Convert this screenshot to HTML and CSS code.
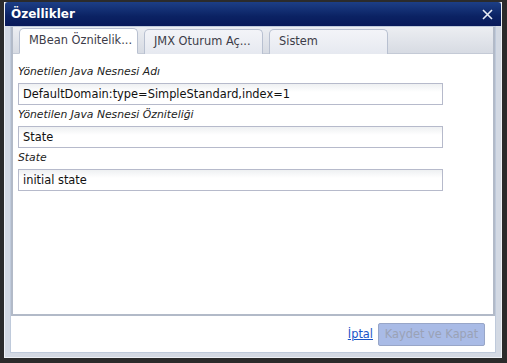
FILE: index.html
```html
<!DOCTYPE html>
<html lang="tr">
  <head>
    <meta charset="UTF-8" />
    <title>Özellikler</title>
    <link rel="stylesheet" href="styles.css">
  </head>
  <body>
    <div class="dialog">
      <div class="titlebar">
        <span class="title">Özellikler</span>
        <svg class="close" width="11" height="11" viewBox="0 0 11 11">
          <path d="M1 1 L10 10 M10 1 L1 10" stroke="#e8ecf4" stroke-width="1.6" fill="none" />
        </svg>
      </div>

      <div class="frame">
        <div class="tabpanel">
          <div class="tabstrip">
            <div class="tab active">MBean Öznitelik...</div>
            <div class="tab">JMX Oturum Aç...</div>
            <div class="tab">Sistem</div>
          </div>

          <div class="content">
            <label class="field-label">Yönetilen Java Nesnesi Adı</label>
            <input class="field" type="text" value="DefaultDomain:type=SimpleStandard,index=1">
            <label class="field-label">Yönetilen Java Nesnesi Özniteliği</label>
            <input class="field" type="text" value="State">
            <label class="field-label">State</label>
            <input class="field" type="text" value="initial state">
          </div>
        </div>

        <div class="footer">
          <a href="#" class="cancel">İptal</a>
          <button class="save" disabled>Kaydet ve Kapat</button>
        </div>
      </div>
    </div>
  </body>
</html>
```

FILE: styles.css
```css
body {
  margin: 0;
  padding: 2px 5px 0 4px;
  background-color: #2b2b2b;
  font-family: 'DejaVu Sans', Verdana, sans-serif;
  font-size: 11px;
}

/* Dialog window */
.dialog {
  width: 496px;
  height: 355px;
  border: 1px solid #eef1f6;
  border-top: none;
  background-color: #d3d9e3;
  display: flex;
  flex-direction: column;
}

.titlebar {
  height: 24px;
  display: flex;
  align-items: center;
  justify-content: space-between;
  padding: 0 8px 0 6px;
  background: linear-gradient(#1d3f86, #0b2263 60%, #08195a);
  border-radius: 3px 3px 0 0;
}

.title {
  color: #ffffff;
  font-weight: bold;
  font-size: 12px;
}

.close {
  display: block;
}

/* Inner white frame */
.frame {
  flex: 1;
  margin: 0 5px 4px 5px;
  background-color: #ffffff;
  border: 1px solid #bfcadb;
  display: flex;
  flex-direction: column;
}

.tabpanel {
  flex: 1;
  border: 2px solid #b2bac8;
  border-top: none;
  display: flex;
  flex-direction: column;
}

.tabstrip {
  height: 26px;
  display: flex;
  align-items: flex-end;
  gap: 6px;
  padding: 0 0 0 6px;
  background: linear-gradient(#eceef2, #d7dbe3);
  border-bottom: 1px solid #c4cad6;
}

.tab {
  width: 108px;
  height: 24px;
  margin-bottom: -1px;
  padding-left: 9px;
  line-height: 23px;
  white-space: nowrap;
  overflow: hidden;
  color: #3c3c48;
  font-size: 11.4px;
  background: linear-gradient(#f3f4f8, #e6e9f0);
  border: 1px solid #b8c0d0;
  border-bottom: none;
  border-radius: 5px 5px 0 0;
}

.tab.active {
  background: #ffffff;
  border-bottom: 1px solid #ffffff;
}

.content {
  flex: 1;
  padding: 8px 0 0 5px;
  display: flex;
  flex-direction: column;
  align-items: flex-start;
}

.field-label {
  font-style: italic;
  color: #222222;
  font-size: 10.8px;
  height: 21px;
  line-height: 20px;
  white-space: nowrap;
}

.field {
  box-sizing: border-box;
  width: 425px;
  height: 22px;
  margin: 0;
  padding: 0 4px;
  border: 1px solid #b6bacb;
  background: linear-gradient(#eef0f2, #ffffff 8px);
  font-family: 'DejaVu Sans', Verdana, sans-serif;
  font-size: 11.4px;
  color: #111111;
}

/* Footer with actions */
.footer {
  height: 36px;
  display: flex;
  align-items: center;
  justify-content: flex-end;
  gap: 5px;
  padding-right: 10px;
}

.cancel {
  color: #1a55c8;
  font-size: 11.4px;
  white-space: nowrap;
}

.save {
  width: 107px;
  height: 23px;
  padding: 0;
  white-space: nowrap;
  font-family: 'DejaVu Sans', Verdana, sans-serif;
  font-size: 11.4px;
  color: #9aa2b6;
  background: #a9bbe6;
  border: 1px solid #98a6c8;
  border-radius: 2px;
}
```
